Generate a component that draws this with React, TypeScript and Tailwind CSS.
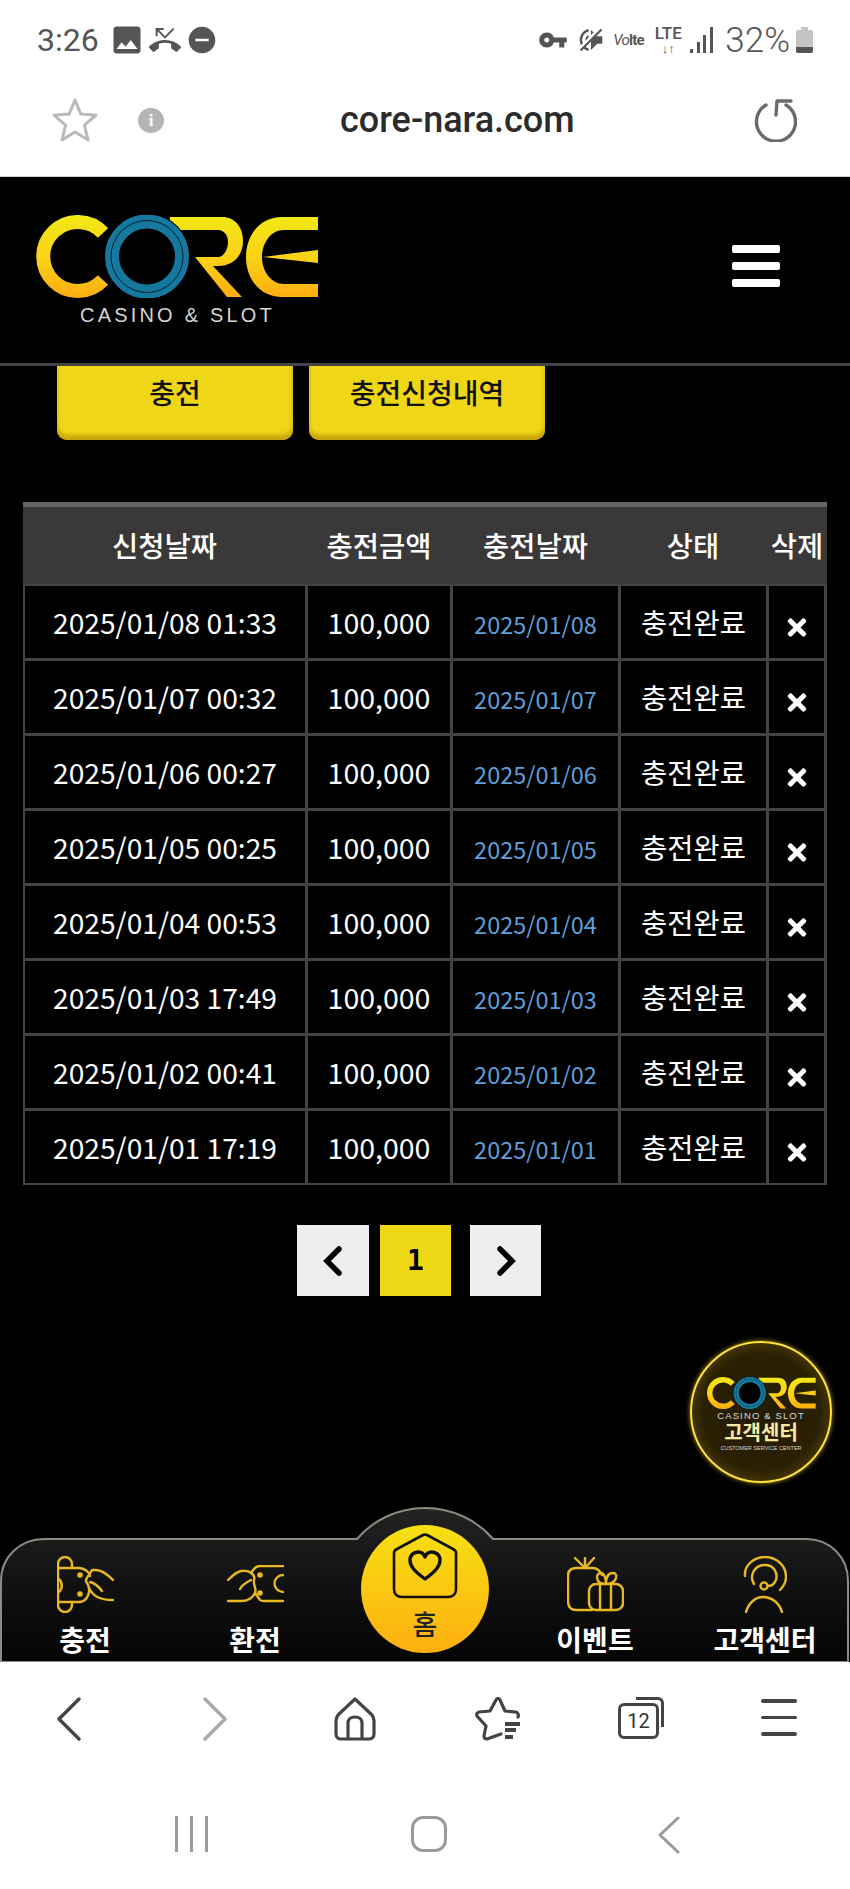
import { FaTimes } from "react-icons/fa";
import { MdDoNotDisturbOn, MdImage, MdPhoneMissed, MdVolumeOff, MdVpnKey } from "react-icons/md";

const rows = [
  ["2025/01/08 01:33", "2025/01/08"],
  ["2025/01/07 00:32", "2025/01/07"],
  ["2025/01/06 00:27", "2025/01/06"],
  ["2025/01/05 00:25", "2025/01/05"],
  ["2025/01/04 00:53", "2025/01/04"],
  ["2025/01/03 17:49", "2025/01/03"],
  ["2025/01/02 00:41", "2025/01/02"],
  ["2025/01/01 17:19", "2025/01/01"],
];

const headers = ["신청날짜", "충전금액", "충전날짜", "상태", "삭제"];

function CoreLogo({ className, id }: { className: string; id: string }) {
  return (
    <svg viewBox="36 214 283 83" className={className} role="img" aria-label="CORE">
      <defs>
        <linearGradient id={id} gradientUnits="userSpaceOnUse" x1="0" y1="214" x2="0" y2="297">
          <stop offset="0" stopColor="#f2e915" />
          <stop offset="0.55" stopColor="#fbd016" />
          <stop offset="1" stopColor="#fcac12" />
        </linearGradient>
      </defs>
      <path d="M103 232 A34.5 34.5 0 1 0 103 279" fill="none" stroke={`url(#${id})`} strokeWidth="14" />
      {/* R */}
      <path
        d="M170 216 H222 C235 216 243 226 243 240 C243 254 234 265 218 265 H213 L242 296 H227 L195 256 H218 C224 256 228 248 228 241 C228 234 224 229 218 229 H170 Z"
        fill={`url(#${id})`}
      />
      {/* E */}
      <path
        d="M318 216 V229 H284 C270 229 262 243 262 256 C262 270 271 283 284 283 H318 V296 H282 C260 296 246 278 246 256 C246 234 260 216 282 216 Z"
        fill={`url(#${id})`}
      />
      <path d="M263 256 L318 249 V262 Z" fill={`url(#${id})`} />
      <circle cx="147" cy="255.5" r="43" fill="#000" />
      <circle cx="147" cy="255.5" r="35" fill="none" stroke="#15799f" strokeWidth="14" />
      <circle cx="147" cy="255.5" r="36" fill="none" stroke="#04202c" strokeWidth="1" />
    </svg>
  );
}

function StatusBar() {
  return (
    <div className="flex h-[80px] items-center pl-[37px] pr-[37px] text-[#555] [font-family:Roboto,sans-serif]">
      <span className="text-[32px] leading-none">3:26</span>
      <MdImage className="ml-[10px] h-[36px] w-[36px]" />
      <MdPhoneMissed className="ml-[4px] h-[32px] w-[32px]" />
      <MdDoNotDisturbOn className="ml-[5px] h-[32px] w-[32px]" />
      <div className="ml-auto flex items-center">
        <MdVpnKey className="h-[34px] w-[30px]" />
        <MdVolumeOff className="ml-[8px] h-[32px] w-[30px] -scale-x-100" />
        <span className="ml-[7px] flex w-[34px] items-baseline leading-none">
          <span className="text-[15px] italic tracking-tighter">Vo</span>
          <span className="text-[15px] font-bold tracking-tighter">lte</span>
        </span>
        <div className="ml-[7px] flex w-[28px] flex-col items-center font-medium">
          <span className="text-[17px] leading-[17px]">LTE</span>
          <span className="text-[13px] font-bold leading-[13px]">↓↑</span>
        </div>
        <svg viewBox="0 0 23 26" className="ml-[8px] h-[26px] w-[23px]" fill="#555">
          <rect x="0" y="22" width="3" height="4" />
          <rect x="7" y="15" width="3" height="11" />
          <rect x="13" y="8" width="3" height="18" />
          <rect x="20" y="0" width="3" height="26" />
        </svg>
        <span className="ml-[12px] text-[35px] font-light leading-none">32%</span>
        <div className="ml-[6px] flex h-[26px] w-[17px] flex-col items-center">
          <div className="h-[3px] w-[7px] rounded-t-[1px] bg-[#c4c4c4]" />
          <div className="flex-1 self-stretch overflow-hidden rounded-[2px] bg-[#c4c4c4]">
            <div className="mt-[17px] h-[6px] bg-[#555]" />
          </div>
        </div>
      </div>
    </div>
  );
}

function UrlBar() {
  return (
    <div className="flex h-[97px] items-center border-b border-[#cfcfcf] pb-[16px]">
      <svg viewBox="0 0 46 46" className="ml-[52px] h-[46px] w-[46px]" fill="none" stroke="#b9b9b9" strokeWidth="3" strokeLinejoin="round">
        <path d="M23 3 L28.8 17 L44 18.2 L32.4 28.2 L36 43 L23 35 L10 43 L13.6 28.2 L2 18.2 L17.2 17 Z" />
      </svg>
      <div className="ml-[40px] flex h-[25px] w-[26px] items-center justify-center rounded-full bg-[#b5b5b5] text-[17px] font-bold leading-none text-white [font-family:'Liberation_Serif',serif]">
        i
      </div>
      <span className="ml-[176px] text-[36px] font-medium leading-[46px] text-[#2b2b2b] [font-family:Roboto,sans-serif]">
        core-nara.com
      </span>
      <svg viewBox="0 0 44 44" className="ml-auto mr-[53px] h-[44px] w-[44px]" fill="none" stroke="#6b6b6b" strokeWidth="3.4" strokeLinecap="round" strokeLinejoin="round">
        <path d="M13 7 A19.5 19.5 0 1 0 33 7" />
        <path d="M23 17 L24 3 L38 3" />
      </svg>
    </div>
  );
}

function RequestTable() {
  return (
    <div className="mx-[23px] mt-[62px] w-[804px]">
      <div className="grid h-[82px] grid-cols-[283px_146px_167px_148px_60px] items-center border-t-[5px] border-[#666466] bg-[#3a3838] text-[28.5px] font-medium leading-none text-white">
        {headers.map((h) => (
          <div key={h} className="text-center">
            {h}
          </div>
        ))}
      </div>
      <div className="grid grid-cols-[280px_142px_165px_145px_55px] gap-[3px] bg-[#444] p-[2px] text-white">
        {rows.map(([requested, charged]) => (
          <div key={requested} className="contents">
            <div className="flex h-[72px] items-center justify-center bg-black pt-[1px] text-[28.2px]">{requested}</div>
            <div className="flex items-center justify-center bg-black pt-[1px] text-[28.5px]">100,000</div>
            <div className="flex items-center justify-center bg-black pt-[6px] text-[23.5px] text-[#5f9fd8]">{charged}</div>
            <div className="flex items-center justify-center bg-black pt-[1px] text-[28.5px]">충전완료</div>
            <div className="flex items-center justify-center bg-black pt-[10px]">
              <FaTimes className="h-[27px] w-[22px]" />
            </div>
          </div>
        ))}
      </div>
    </div>
  );
}

function Pagination() {
  return (
    <div className="ml-[297px] mt-[40px] flex h-[71px]">
      <div className="flex w-[72px] items-center justify-center bg-[#f0edf0]">
        <svg viewBox="0 0 20 30" className="h-[30px] w-[20px]" fill="none" stroke="#000" strokeWidth="5.5" strokeLinecap="round">
          <path d="M16 3 L4 15 L16 27" />
        </svg>
      </div>
      <div className="ml-[11px] flex w-[71px] items-center justify-center bg-[#eed714] text-[28px] font-bold text-black [font-family:'DejaVu_Sans_Mono',monospace]">
        1
      </div>
      <div className="ml-[19px] flex w-[71px] items-center justify-center bg-[#f0edf0]">
        <svg viewBox="0 0 20 30" className="h-[30px] w-[20px]" fill="none" stroke="#000" strokeWidth="5.5" strokeLinecap="round">
          <path d="M4 3 L16 15 L4 27" />
        </svg>
      </div>
    </div>
  );
}

function ChargeIcon() {
  return (
    <svg viewBox="0 0 57 57" className="h-[57px] w-[57px]" fill="none" stroke="#e8b924" strokeWidth="2.4" strokeLinecap="round" strokeLinejoin="round">
      <path d="M1 8 A7 7 0 0 1 15 8 V12 H1 Z" />
      <path d="M1 46 H15 V49 A7 7 0 0 1 1 49 Z" />
      <path d="M1 12 V46" />
      <path d="M15 12 H22 C28 12 33 17 33 20" />
      <path d="M15 46 H22 C28 46 33 40 32 32 C31 26 28 26 29 24 C30 21 32 19 35 14 H39 C44 14 50 18 56 24" />
      <path d="M32 32 C36 40 42 44 56 44" />
      <path d="M33 26 C38 27 42 31 45 35" />
      <path d="M2 23 A9 9 0 0 1 2 36" />
      <circle cx="23" cy="19" r="1.6" fill="#e8b924" />
      <circle cx="23" cy="38" r="1.6" fill="#e8b924" />
    </svg>
  );
}

function ExchangeIcon() {
  return (
    <svg viewBox="0 0 57 38" className="h-[38px] w-[57px]" fill="none" stroke="#e8b924" strokeWidth="2.4" strokeLinecap="round" strokeLinejoin="round">
      <path d="M56 1 H34 C28 1 27 4 24 8 C21 5 18 6 14 6 C9 7 5 11 1 15" />
      <path d="M1 36 H14 C20 36 25 34 28 28 C30 24 26 20 27 15 C28 12 27 10 24 8" />
      <path d="M28 28 L33 35 C34 36 35 36 37 36 H56" />
      <path d="M24 15 C20 17 15 20 13 24" />
      <path d="M56 10 A8.5 8.5 0 1 0 56 27" />
      <circle cx="33" cy="10" r="1.6" fill="#e8b924" />
      <circle cx="33" cy="28" r="1.6" fill="#e8b924" />
    </svg>
  );
}

function GiftIcon() {
  return (
    <svg viewBox="0 0 57 55" className="h-[55px] w-[57px]" fill="none" stroke="#e8b924" strokeWidth="2.4" strokeLinecap="round" strokeLinejoin="round">
      <path d="M8 1 L18 11 L27 1 M18 1 V11" />
      <path d="M35 18 C33 14 30 11 26 11 H9 C4 11 1 14 1 19 V44 C1 50 4 53 9 53 H25" />
      <rect x="22" y="27" width="34" height="26" rx="7" />
      <path d="M33 27 V53 M44 27 V53" />
      <path d="M39 27 C28 27 28 16 34 16 C37 16 39 21 39 27 C39 21 41 16 46 16 C52 16 50 27 39 27 Z" />
    </svg>
  );
}

function AgentIcon() {
  return (
    <svg viewBox="0 0 44 57" className="h-[57px] w-[44px]" fill="none" stroke="#e8b924" strokeWidth="2.4" strokeLinecap="round" strokeLinejoin="round">
      <path d="M2 20 C1 10 10 1 22 1 C34 1 43 10 43 21 C43 27 40 31 37 34" />
      <path d="M11 28 C6 20 11 9 22 9 C31 9 35 17 33 24 C31 29 27 30 25 30" />
      <circle cx="21" cy="30" r="3.5" />
      <path d="M3 56 C6 46 13 41 20 41 C28 41 36 46 39 56" />
    </svg>
  );
}

function NavItem({ label, children }: { label: string; children: React.ReactNode }) {
  return (
    <div className="flex flex-col items-center">
      <div className="mt-[47px] flex h-[60px] items-center justify-center">{children}</div>
      <span className="mt-[7px] text-[28px] font-bold leading-[36px] text-white">{label}</span>
    </div>
  );
}

function BottomNav() {
  return (
    <nav className="relative h-[155px]">
      <svg viewBox="0 0 850 155" className="absolute inset-0 h-full w-full">
        <defs>
          <linearGradient id="navFill" x1="0" y1="0" x2="0" y2="1">
            <stop offset="0" stopColor="#232323" />
            <stop offset="0.5" stopColor="#111" />
            <stop offset="1" stopColor="#050505" />
          </linearGradient>
        </defs>
        <path
          d="M1 155 V74 C1 50 20 32 44 32 H357 C372 14 397 1 425 1 C453 1 478 14 493 32 H806 C830 32 848 50 848 74 V155 Z"
          fill="url(#navFill)"
          stroke="#8b8b7f"
          strokeWidth="2"
        />
      </svg>
      <div className="relative grid grid-cols-5">
        <NavItem label="충전">
          <ChargeIcon />
        </NavItem>
        <NavItem label="환전">
          <ExchangeIcon />
        </NavItem>
        <div className="flex justify-center">
          <div className="mt-[18px] flex h-[128px] w-[128px] flex-col items-center rounded-full bg-gradient-to-b from-[#f5e012] to-[#fdaf10]">
            <svg viewBox="0 0 66 66" className="mt-[8px] h-[66px] w-[66px]" fill="none" stroke="#111" strokeWidth="2.6" strokeLinejoin="round">
              <path d="M2 20 C2 18 3 17 5 16 L31 2 C32 1.5 34 1.5 35 2 L61 16 C63 17 64 18 64 20 V56 C64 61 61 64 56 64 H10 C5 64 2 61 2 56 Z" />
              <path d="M33 46 C22 38 18 33 18 27 C18 22 22 19 26 19 C29 19 32 21 33 24 C34 21 37 19 40 19 C44 19 48 22 48 27 C48 33 44 38 33 46 Z" strokeWidth="3.4" />
            </svg>
            <span className="mt-[10px] text-[27px] font-medium leading-[30px] text-[#222]">홈</span>
          </div>
        </div>
        <NavItem label="이벤트">
          <GiftIcon />
        </NavItem>
        <NavItem label="고객센터">
          <AgentIcon />
        </NavItem>
      </div>
    </nav>
  );
}

function SupportBadge() {
  return (
    <div className="absolute left-[690px] top-[1164px] flex h-[142px] w-[142px] flex-col items-center rounded-full border-2 border-[#ffe23c] bg-[radial-gradient(circle,#231b03_0%,#2a2003_60%,#6b5406_88%,#d4ac10_100%)] shadow-[0_0_5px_#b8960f]">
      <CoreLogo id="badgeGold" className="mt-[34px] h-[32px] w-[111px]" />
      <span className="mt-[1px] text-[9.5px] leading-[11px] tracking-[0.12em] text-[#d8d8d8] [font-family:'Liberation_Sans',sans-serif]">
        CASINO &amp; SLOT
      </span>
      <span className="mt-[1px] text-[20px] font-bold leading-[20px] text-[#f6eba6]">고객센터</span>
      <span className="mt-[2px] text-[5.5px] leading-[9px] text-[#d8d8d8] [font-family:'Liberation_Sans',sans-serif]">
        CUSTOMER SERVICE CENTER
      </span>
    </div>
  );
}

function BrowserBar() {
  return (
    <div className="flex h-[125px] items-start pt-[35px]">
      <svg viewBox="0 0 24 44" className="ml-[57px] h-[44px] w-[24px]" fill="none" stroke="#444" strokeWidth="3.4" strokeLinecap="round" strokeLinejoin="round">
        <path d="M22 2 L2 22 L22 42" />
      </svg>
      <svg viewBox="0 0 24 44" className="ml-[122px] h-[44px] w-[24px]" fill="none" stroke="#aaa" strokeWidth="3.4" strokeLinecap="round" strokeLinejoin="round">
        <path d="M2 2 L22 22 L2 42" />
      </svg>
      <svg viewBox="0 0 42 44" className="ml-[107px] h-[44px] w-[42px]" fill="none" stroke="#444" strokeWidth="3.2" strokeLinejoin="round">
        <path d="M21 2 L38 18 C39.5 20 40 21 40 24 V37 C40 40 38 42 35 42 H7 C4 42 2 40 2 37 V24 C2 21 2.5 20 4 18 Z" />
        <path d="M14 42 V26 C14 22 17 20 21 20 C25 20 28 22 28 26 V42" />
      </svg>
      <svg viewBox="0 0 46 44" className="ml-[99px] h-[44px] w-[46px]" fill="none" stroke="#444" strokeWidth="3.2" strokeLinecap="round" strokeLinejoin="round">
        <path d="M26 37 L12 42 C10 42 9 41 9 39 L11 29 L2 19 C1 17 2 16 4 15 L15 14 L21 3 C22 1 24 1 25 3 L30 14 L41 15 C43 16 44 18 43 20" />
        <path d="M30 27 H45 M30 33 H41 M30 40 H38" strokeWidth="4" strokeLinecap="butt" />
      </svg>
      <div className="relative ml-[97px] h-[42px] w-[46px]">
        <div className="absolute right-0 top-0 h-[30px] w-[28px] rounded-tr-[6px] border-r-[3px] border-t-[3px] border-[#444]" />
        <div className="absolute bottom-0 left-0 flex h-[36px] w-[41px] items-center justify-center rounded-[6px] border-[3px] border-[#444] bg-white text-[20px] leading-none text-[#333] [font-family:Roboto,sans-serif]">
          12
        </div>
      </div>
      <div className="ml-[97px] mt-[2px] flex w-[36px] flex-col gap-[13px]">
        <div className="h-[3.5px] rounded-full bg-[#444]" />
        <div className="h-[3.5px] rounded-full bg-[#444]" />
        <div className="h-[3.5px] rounded-full bg-[#444]" />
      </div>
    </div>
  );
}

function SystemNav() {
  return (
    <div className="flex items-start pt-[29px]">
      <div className="ml-[175px] flex h-[36px] w-[33px] justify-between">
        <div className="w-[3px] bg-[#9a9a9a]" />
        <div className="w-[3px] bg-[#9a9a9a]" />
        <div className="w-[3px] bg-[#9a9a9a]" />
      </div>
      <div className="ml-[203px] h-[36px] w-[36px] rounded-[12px] border-[3px] border-[#9a9a9a]" />
      <svg viewBox="0 0 22 38" className="ml-[211px] h-[38px] w-[22px]" fill="none" stroke="#9a9a9a" strokeWidth="3" strokeLinecap="round" strokeLinejoin="round">
        <path d="M20 2 L2 19 L20 36" />
      </svg>
    </div>
  );
}

export default function App() {
  return (
    <div className="flex h-[1889px] w-[850px] flex-col overflow-hidden bg-white [font-family:'Noto_Sans_CJK_KR','Noto_Sans',sans-serif]">
      <StatusBar />
      <UrlBar />
      <main className="relative flex flex-1 flex-col bg-black">
        <header className="flex h-[189px] items-center border-b-[3px] border-[#444] pl-[36px] pr-[70px]">
          <div className="flex flex-col items-center">
            <CoreLogo id="headerGold" className="h-[83px] w-[283px]" />
            <span className="mt-[6px] text-[20px] leading-[22px] tracking-[0.16em] text-[#d5d5d5] [font-family:'Liberation_Sans',sans-serif]">
              CASINO &amp; SLOT
            </span>
          </div>
          <div className="mb-[8px] ml-auto flex w-[48px] flex-col gap-[9px]">
            <div className="h-[8px] rounded-[2px] bg-white" />
            <div className="h-[8px] rounded-[2px] bg-white" />
            <div className="h-[8px] rounded-[2px] bg-white" />
          </div>
        </header>
        <div className="ml-[57px] flex gap-[16px]">
          <button className="h-[74px] w-[236px] rounded-b-[10px] bg-[#efd717] pb-[22px] text-[28px] font-medium leading-[40px] text-[#111] shadow-[inset_0_-5px_4px_#c8a40e]">
            충전
          </button>
          <button className="h-[74px] w-[236px] rounded-b-[10px] bg-[#efd717] pb-[22px] text-[28px] font-medium leading-[40px] text-[#111] shadow-[inset_0_-5px_4px_#c8a40e]">
            충전신청내역
          </button>
        </div>
        <RequestTable />
        <Pagination />
        <SupportBadge />
        <div className="mt-auto">
          <BottomNav />
        </div>
      </main>
      <BrowserBar />
      <div className="h-[102px]">
        <SystemNav />
      </div>
    </div>
  );
}
